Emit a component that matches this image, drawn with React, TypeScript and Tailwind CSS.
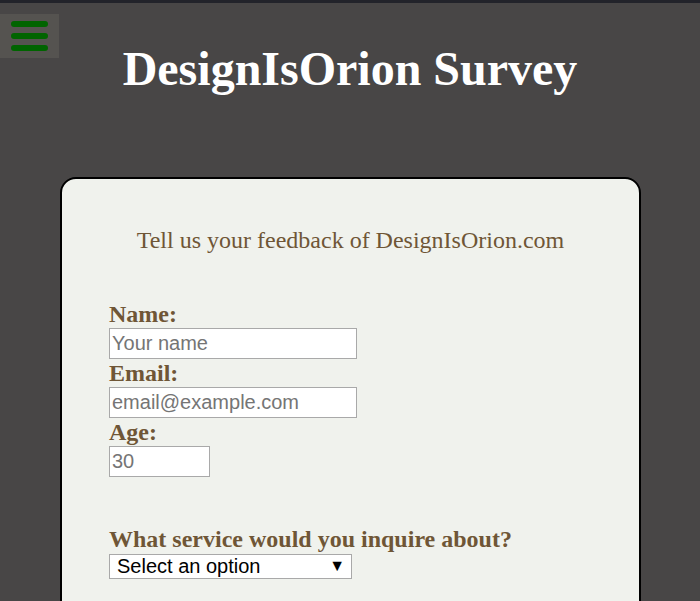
import { useState } from 'react'

const serif = "font-['Liberation_Serif','Times_New_Roman',serif]"
const sans = "font-['Liberation_Sans',Arial,sans-serif]"

function Menu() {
    return (
        <button className="absolute left-0 top-[11px] flex h-[44px] w-[59px] flex-col items-center justify-center gap-[6px] bg-[#555350] px-[11px]">
            <span className="block h-[6px] w-[37px] rounded-full bg-[#006400]" />
            <span className="block h-[6px] w-[37px] rounded-full bg-[#006400]" />
            <span className="block h-[6px] w-[37px] rounded-full bg-[#006400]" />
        </button>
    )
}

export default function App() {
    const [service, setService] = useState('')

    return (
        <div className={`min-h-screen bg-[#484646] ${serif}`}>
            <div className="h-[3px] bg-[#22232a]" />
            <header className="relative">
                <Menu />
                <h1 className="pt-[39px] text-center text-[48px] font-bold leading-[53px] text-white">
                    DesignIsOrion Survey
                </h1>
            </header>

            <main className="mt-[82px] ml-[60px] w-[581px] rounded-[16px] border-2 border-black bg-[#f0f2ed] px-[47px] pt-[48px] pb-[60px] text-[#6f5636]">
                <p className="text-center text-[24px] leading-[27px]">
                    Tell us your feedback of DesignIsOrion.com
                </p>

                <form className="mt-[46px] flex flex-col items-start">
                    <label htmlFor="name" className="text-[24px] font-bold leading-[28px]">Name:</label>
                    <input
                        id="name"
                        type="text"
                        placeholder="Your name"
                        className={`h-[31px] w-[248px] border border-[#a9a9a9] bg-white px-[2px] text-[20px] text-black placeholder:text-[#757575] outline-none ${sans}`}
                    />
                    <label htmlFor="email" className="text-[24px] font-bold leading-[28px]">Email:</label>
                    <input
                        id="email"
                        type="email"
                        placeholder="email@example.com"
                        className={`h-[31px] w-[248px] border border-[#a9a9a9] bg-white px-[2px] text-[20px] text-black placeholder:text-[#757575] outline-none ${sans}`}
                    />
                    <label htmlFor="age" className="text-[24px] font-bold leading-[28px]">Age:</label>
                    <input
                        id="age"
                        type="text"
                        placeholder="30"
                        className={`h-[31px] w-[101px] border border-[#a9a9a9] bg-white px-[2px] text-[20px] text-black placeholder:text-[#757575] outline-none ${sans}`}
                    />

                    <label htmlFor="service" className="mt-[48px] text-[24px] font-bold leading-[28px]">
                        What service would you inquire about?
                    </label>
                    <div className="relative mt-[1px]">
                        <select
                            id="service"
                            value={service}
                            onChange={e => setService(e.target.value)}
                            className={`h-[25px] w-[243px] appearance-none border border-[#a9a9a9] bg-white pl-[7px] text-[20px] leading-[23px] text-black outline-none ${sans}`}
                        >
                            <option value="">Select an option</option>
                            <option value="web">Web design</option>
                            <option value="logo">Logo design</option>
                            <option value="seo">SEO</option>
                        </select>
                        <span className={`pointer-events-none absolute right-[7px] top-[2px] text-[16px] leading-[20px] text-black ${sans}`}>▼</span>
                    </div>
                </form>
            </main>
        </div>
    )
}
